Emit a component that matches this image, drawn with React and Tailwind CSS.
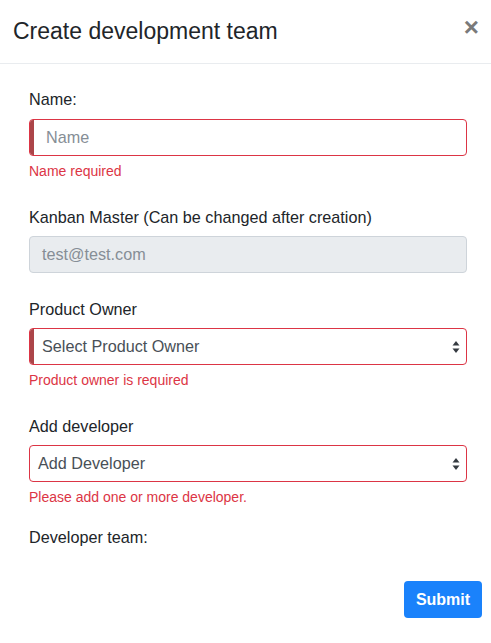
import React from "react";

function Arrows() {
  return (
    <svg width="8" height="14" viewBox="0 0 8 14" className="absolute right-[6px] top-1/2 -translate-y-1/2">
      <path d="M4 1 L7.5 5.5 L0.5 5.5 Z" fill="#343a40" />
      <path d="M4 13 L7.5 8.5 L0.5 8.5 Z" fill="#343a40" />
    </svg>
  );
}

export default function App() {
  return (
    <div className="w-[491px] h-[643px] bg-white text-[#212529]" style={{ fontFamily: '"Liberation Sans", Arial, sans-serif' }}>
      <div className="h-[64px] border-b border-[#e9ecef] flex items-center justify-between pl-[13px] pr-[12px]">
        <h5 className="text-[23px] leading-none text-[#212529]">Create development team</h5>
        <span className="text-[26px] font-bold text-[#7a7a7a] leading-none -mt-[10px]">×</span>
      </div>
      <div className="pt-[22px] pl-[29px] pr-[24px] text-[16.2px]">
        <div className="leading-[24px] mb-[8px] pt-[1px]">Name:</div>
        <div className="relative h-[37px] rounded-[4px] border border-[#dc3545] overflow-hidden flex items-center">
          <div className="absolute left-0 top-0 bottom-0 w-[4px] bg-[#ac4549]" />
          <span className="pl-[16px] text-[#868e96]">Name</span>
        </div>
        <div className="mt-[5px] leading-[21px] text-[14px] text-[#dc3545]">Name required</div>

        <div className="mt-[23px] leading-[24px] mb-[7px]">Kanban Master (Can be changed after creation)</div>
        <div className="h-[37px] rounded-[4px] border border-[#ced4da] bg-[#e9ecef] flex items-center">
          <span className="pl-[12px] text-[#868e96]">test@test.com</span>
        </div>

        <div className="mt-[24px] leading-[24px] mb-[7px]">Product Owner</div>
        <div className="relative h-[37px] rounded-[4px] border border-[#dc3545] overflow-hidden flex items-center">
          <div className="absolute left-0 top-0 bottom-0 w-[4px] bg-[#ac4549]" />
          <span className="pl-[12px] text-[#495057]">Select Product Owner</span>
          <Arrows />
        </div>
        <div className="mt-[5px] leading-[21px] text-[14px] text-[#dc3545]">Product owner is required</div>

        <div className="mt-[23px] leading-[24px] mb-[7px]">Add developer</div>
        <div className="relative h-[37px] rounded-[4px] border border-[#dc3545] flex items-center">
          <span className="pl-[8px] text-[#495057]">Add Developer</span>
          <Arrows />
        </div>
        <div className="mt-[5px] leading-[21px] text-[14px] text-[#dc3545]">Please add one or more developer.</div>

        <div className="mt-[17px] leading-[24px]">Developer team:</div>
      </div>
      <div className="flex justify-end pr-[9px] mt-[32px]">
        <button className="h-[37px] w-[78px] rounded-[4px] bg-[#1a82fb] text-white font-bold text-[16px]">Submit</button>
      </div>
    </div>
  );
}
